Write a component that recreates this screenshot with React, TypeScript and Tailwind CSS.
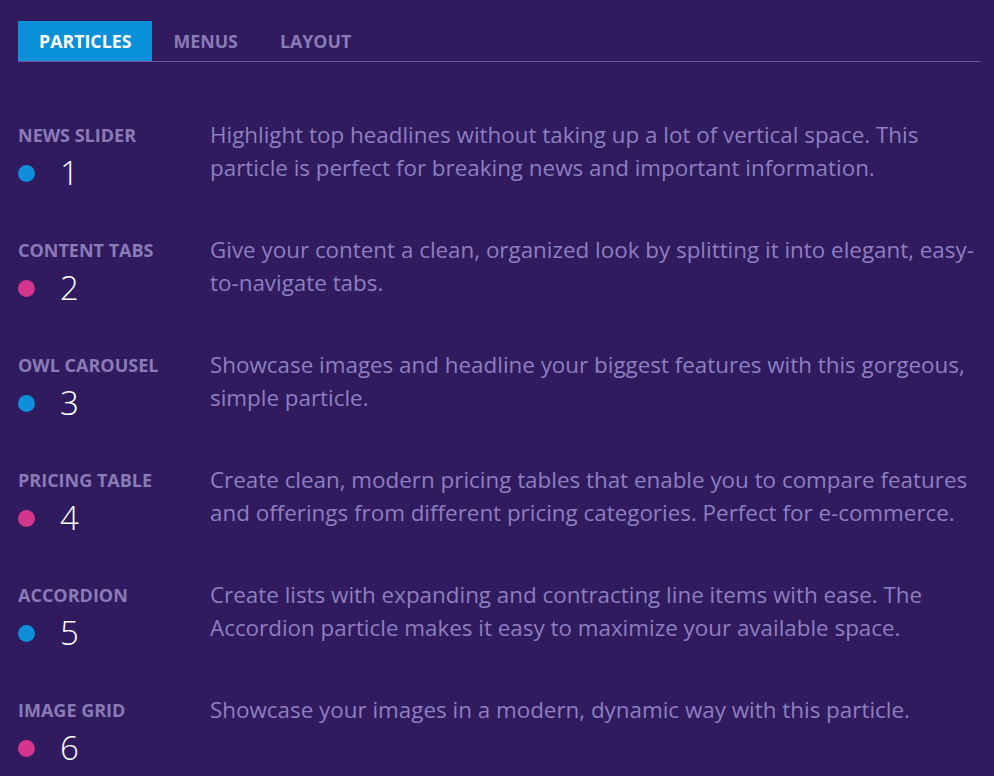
import React from "react";

const tabs = ["Particles", "Menus", "Layout"];

const rows = [
  {
    name: "News Slider",
    color: "bg-[#0f8fdb]",
    text: "Highlight top headlines without taking up a lot of vertical space. This particle is perfect for breaking news and important information.",
  },
  {
    name: "Content Tabs",
    color: "bg-[#d4368d]",
    text: "Give your content a clean, organized look by splitting it into elegant, easy-to-navigate tabs.",
  },
  {
    name: "Owl Carousel",
    color: "bg-[#0f8fdb]",
    text: "Showcase images and headline your biggest features with this gorgeous, simple particle.",
  },
  {
    name: "Pricing Table",
    color: "bg-[#d4368d]",
    text: "Create clean, modern pricing tables that enable you to compare features and offerings from different pricing categories. Perfect for e-commerce.",
  },
  {
    name: "Accordion",
    color: "bg-[#0f8fdb]",
    text: "Create lists with expanding and contracting line items with ease. The Accordion particle makes it easy to maximize your available space.",
  },
  {
    name: "Image Grid",
    color: "bg-[#d4368d]",
    text: "Showcase your images in a modern, dynamic way with this particle.",
  },
];

export default function App() {
  return (
    <div
      className="min-h-screen bg-[#2f1b5e] pl-[18px] pr-[14px] pt-[21px]"
      style={{ fontFamily: '"Open Sans", "Liberation Sans", sans-serif' }}
    >
      {/* Tabs */}
      <div className="flex border-b border-[#6a56a3]">
        {tabs.map((t, i) => (
          <div
            key={t}
            className={`h-[40px] px-[21px] flex items-center text-[17.8px] font-bold uppercase ${
              i === 0 ? "bg-[#0a8fd9] text-white" : "text-[#8a7bb6]"
            }`}
          >
            {t}
          </div>
        ))}
      </div>

      {/* Particle list */}
      <div className="flex flex-col gap-[40px] pt-[56px]">
        {rows.map((r, i) => (
          <div key={r.name} className="flex">
            <div className="w-[192px] shrink-0">
              <div className="h-[33px] leading-[33px] pt-[1px] text-[18px] font-bold uppercase text-[#8a7bb6]">
                {r.name}
              </div>
              <div className="mt-[2px] h-[40px] flex items-center gap-[25px]">
                <span className={`w-[17px] h-[17px] rounded-full ${r.color}`}></span>
                <span className="text-[33px] leading-[40px] font-light text-white">{i + 1}</span>
              </div>
            </div>
            <p className="flex-1 text-[22.4px] leading-[33px] text-[#8e7fc0]">{r.text}</p>
          </div>
        ))}
      </div>
    </div>
  );
}
